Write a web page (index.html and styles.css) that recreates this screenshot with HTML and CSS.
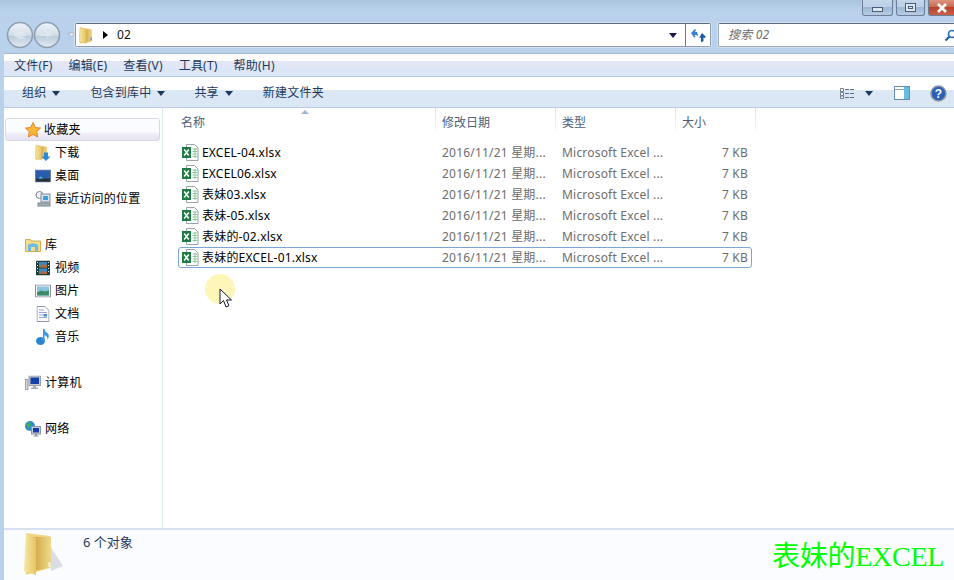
FILE: index.html
```html
<!DOCTYPE html>
<html lang="zh">
<head>
<meta charset="utf-8">
<title>02</title>
<link rel="stylesheet" href="styles.css">
</head>
<body>
<svg class="defs" width="0" height="0">
  <defs>
    <linearGradient id="fold" x1="0" y1="0" x2="1" y2="0"><stop offset="0" stop-color="#f8e8a8"/><stop offset="1" stop-color="#e6c463"/></linearGradient>
    <linearGradient id="foldin" x1="0" y1="0" x2="1" y2="0"><stop offset="0" stop-color="#cfa845"/><stop offset="1" stop-color="#efd98a"/></linearGradient>
    <linearGradient id="orb" x1="0" y1="0" x2="0" y2="1"><stop offset="0" stop-color="#eef3f9"/><stop offset=".5" stop-color="#d3deea"/><stop offset=".55" stop-color="#bccbdb"/><stop offset="1" stop-color="#e2eaf2"/></linearGradient>
    <symbol id="folder" viewBox="0 0 14 17">
      <path d="M1 .5l11 1.500v12.500l-11 2z" fill="#eccf74"/>
      <path d="M6 2.500h7v11.500l-7 2z" fill="url(#foldin)"/>
      <path d="M1 .5l6 2.500v13.500l-7-2z" fill="url(#fold)" stroke="#dcbc60" stroke-width=".5"/>
      <rect x="11.500" y="10.500" width="1.500" height="3" fill="#5aa0d8"/>
    </symbol>
    <symbol id="excel" viewBox="0 0 17 17">
      <path d="M4.500 .5h8l3.500 3.500v12.500h-11.500z" fill="#fff" stroke="#9aa3a8"/>
      <path d="M10.500 5h5M10.500 7.500h5M10.500 10h5M10.500 12.500h5M13 4v10" stroke="#8fc7a0"/>
      <rect x="0" y="3" width="9" height="11" fill="#1f7a45"/>
      <path d="M2.200 5.500l4.600 6M6.800 5.500l-4.600 6" stroke="#fff" stroke-width="1.500"/>
    </symbol>
  </defs>
</svg>

<div class="window">
  <header class="titlebar">
    <div class="winbtn min"><span class="min-glyph"></span></div>
    <div class="winbtn max"><span class="max-glyph"></span></div>
    <div class="winbtn close">
      <svg width="12" height="10" viewBox="0 0 12 10"><path d="M2 1l8 8M10 1l-8 8" stroke="#fff" stroke-width="2.600"/></svg>
    </div>
  </header>

  <nav class="navbar">
    <div class="orbs">
      <svg width="70" height="30" viewBox="0 0 70 30">
        <circle cx="15" cy="15" r="12.500" fill="url(#orb)" stroke="#8c9db0" stroke-width="1.500"/>
        <circle cx="42" cy="15" r="12.500" fill="url(#orb)" stroke="#8c9db0" stroke-width="1.500"/>
        <path d="M8 15l6-4h7l-3 3h3v2h-3l3 3h-7zM34 14h8l-2-3 8 4-8 4 2-3h-8z" fill="#e6edf4" opacity=".6"/>
        <path d="M63 13h7l-3.500 4z" fill="#e9eff6" stroke="#93a4b6" stroke-width=".6"/>
      </svg>
    </div>
    <div class="addr">
      <svg class="addr-folder" width="14" height="17"><use href="#folder"/></svg>
      <svg class="addr-arrow" width="5" height="8" viewBox="0 0 5 8"><path d="M0 0l5 4-5 4z" fill="#000"/></svg>
      <span class="addr-text">02</span>
      <span class="addr-drop"></span>
      <span class="addr-refresh">
        <svg width="15" height="15" viewBox="0 0 15 15"><path d="M0 5l4-4 1 1-1 2h2l1 3v1L5 7H3.500l1 2L3 9.500z" fill="#3a80d0"/><path d="M11 5l4 4-1.500 1-1-.5V13L10 14.500V9.500L8 10z" fill="#1a5aa8"/></svg>
      </span>
    </div>
    <div class="search">
      <span class="search-text">搜索 02</span>
      <svg class="search-icon" width="13" height="13" viewBox="0 0 13 13"><circle cx="8" cy="5" r="3.500" fill="#fff" stroke="#2a6fb8" stroke-width="1.700"/><path d="M5.500 7.500L1.500 11.500" stroke="#1c5ca8" stroke-width="2.200"/></svg>
    </div>
  </nav>

  <main class="frame">
    <div class="menubar">
      <span>文件(F)</span><span>编辑(E)</span><span>查看(V)</span><span>工具(T)</span><span>帮助(H)</span>
    </div>

    <div class="toolbar">
      <span class="tool t1">组织<i class="caret"></i></span>
      <span class="tool t2">包含到库中<i class="caret"></i></span>
      <span class="tool t3">共享<i class="caret"></i></span>
      <span class="tool t4">新建文件夹</span>
      <span class="tool-right">
        <svg class="view-icon" width="15" height="11" viewBox="0 0 15 11"><path d="M.5.5h3v3h-3zM.5 4.500h3v3h-3zM.5 8h3v2.500h-3z" fill="#fff" stroke="#6d7f94"/><path d="M5 1.500h10M5 5.500h10M5 9.500h10" stroke="#5d6f85" stroke-dasharray="4 1"/></svg>
        <i class="caret view-caret"></i>
        <svg class="pane-icon" width="16" height="14" viewBox="0 0 16 14"><rect x=".5" y=".5" width="15" height="13" fill="#fff" stroke="#6b8bb0"/><rect x="10" y="1" width="5" height="12" fill="#62bde0"/><path d="M1 3.500h9" stroke="#8aa4c2"/></svg>
        <svg class="help-icon" width="17" height="17" viewBox="0 0 17 17"><circle cx="8.500" cy="8.500" r="7.500" fill="#2b5fb5" stroke="#8c97a6" stroke-width="1.500"/><text x="8.500" y="13" text-anchor="middle" class="help-q">?</text></svg>
      </span>
    </div>

    <div class="body">
      <aside class="sidebar">
        <section class="group">
          <div class="row head fav">
            <svg class="ico" width="16" height="16" viewBox="0 0 16 16"><path d="M8 .5l2.300 5 5.200.6-3.800 3.600 1 5.300L8 12.400 3.300 15l1-5.300L.5 6.100l5.200-.6z" fill="#f8b838" stroke="#e8822a"/></svg>
            <span>收藏夹</span>
          </div>
          <div class="row item">
            <svg class="ico" width="16" height="17" viewBox="0 0 16 17"><use href="#folder" width="13" height="16"/><path d="M9 8h4v4h2.500L11 16.500 6.500 12H9z" fill="#2b88d8"/></svg>
            <span>下载</span>
          </div>
          <div class="row item">
            <svg class="ico" width="16" height="13" viewBox="0 0 16 13"><rect x=".5" y=".5" width="15" height="12" fill="#2a5cb0" stroke="#6d7f94"/><rect x="1" y="9" width="14" height="3" fill="#2b3138"/><path d="M3 9l3-2 2 2z" fill="#5fc0d8"/></svg>
            <span>桌面</span>
          </div>
          <div class="row item">
            <svg class="ico" width="16" height="16" viewBox="0 0 16 16"><circle cx="4.500" cy="4" r="3.500" fill="#eef1f4" stroke="#7a8590"/><rect x="6" y="3" width="9" height="8" fill="#d8e2ec" stroke="#808b96"/><rect x="8" y="5" width="5" height="4" fill="#3aa0d8"/><rect x="3" y="12" width="12" height="3" fill="#a8b0b8" stroke="#7a8590"/></svg>
            <span>最近访问的位置</span>
          </div>
        </section>

        <section class="group">
          <div class="row head">
            <svg class="ico" width="16" height="14" viewBox="0 0 16 14"><path d="M.5 1.500h5l1 1.500h9v10.500H.5z" fill="#f5dc8c" stroke="#cfae55"/><path d="M3 13V7q5-3.500 10 0v6h-3V9H6v4z" fill="#6cbae6"/></svg>
            <span>库</span>
          </div>
          <div class="row item">
            <svg class="ico" width="14" height="15" viewBox="0 0 14 15"><rect width="14" height="15" fill="#1f3d3d"/><path d="M3 1.500h8v5.500H3zM3 8h8v5.500H3z" fill="#3e86c0"/><path d="M4 6l3-3 2 2 2-1v3H4zM4 13l3-3 2 2 2-1v2.500H4z" fill="#b86838"/><path d="M1 2h1M1 5h1M1 8h1M1 11h1M12 2h1M12 5h1M12 8h1M12 11h1" stroke="#d8e8e8"/></svg>
            <span>视频</span>
          </div>
          <div class="row item">
            <svg class="ico" width="16" height="13" viewBox="0 0 16 13"><rect x=".5" y=".5" width="15" height="12" fill="#f2f4f6" stroke="#8c959e"/><rect x="2" y="2" width="12" height="9" fill="#8cc4dc"/><path d="M2 8l4-2 4 1 4-1v5H2z" fill="#3c8a68"/></svg>
            <span>图片</span>
          </div>
          <div class="row item">
            <svg class="ico" width="13" height="16" viewBox="0 0 13 16"><path d="M.5.5h8l4 4v11H.5z" fill="#fbfcfe" stroke="#939aa3"/><path d="M2.500 4h5M2.500 6.500h8M2.500 9h4M2.500 11.500h8" stroke="#9ba6d8"/><rect x="7" y="8" width="3.500" height="2.500" fill="#4a8ac0"/></svg>
            <span>文档</span>
          </div>
          <div class="row item">
            <svg class="ico" width="14" height="17" viewBox="0 0 14 17"><ellipse cx="4.500" cy="12.500" rx="4.500" ry="4" fill="#2b86d0"/><path d="M7 12.500V.5h1.500q.5 3 3.500 4.500 2 2.500-.5 6 0-3.500-3-4.500v6z" fill="#3a9ae0"/></svg>
            <span>音乐</span>
          </div>
        </section>

        <section class="group">
          <div class="row head">
            <svg class="ico" width="16" height="15" viewBox="0 0 16 15"><rect x=".5" y="4" width="2.500" height="10" fill="#d4d8dc" stroke="#7d858d" stroke-width=".7"/><rect x="4" y=".5" width="11.500" height="9.500" fill="#c8ccd0" stroke="#9aa0a6"/><rect x="5.500" y="2" width="8.500" height="6.500" fill="#123fa8"/><path d="M8 10h3v2h2v1.500H6V12h2z" fill="#a8aeb4"/></svg>
            <span>计算机</span>
          </div>
        </section>

        <section class="group">
          <div class="row head">
            <svg class="ico" width="16" height="16" viewBox="0 0 16 16"><circle cx="5" cy="5" r="5" fill="#2f8ccc"/><path d="M1 3l3-2 2 3-3 3zM6 6l3 1-3 3z" fill="#3fb04a"/><rect x="6.500" y="5.500" width="9" height="7.500" fill="#c8ccd2" stroke="#8f959c"/><rect x="8" y="7" width="6" height="4.500" fill="#123fa8"/><path d="M10 13h2v1.500h1.500v1h-5v-1H10z" fill="#8f959c"/></svg>
            <span>网络</span>
          </div>
        </section>
      </aside>

      <section class="content">
        <div class="colhead">
          <span class="col c-name">名称<i class="sort"></i></span>
          <span class="col c-date">修改日期</span>
          <span class="col c-type">类型</span>
          <span class="col c-size">大小</span>
        </div>
        <div class="files">
          <div class="file"><span class="fname"><svg width="17" height="17"><use href="#excel"/></svg>EXCEL-04.xlsx</span><span>2016/11/21 星期...</span><span>Microsoft Excel ...</span><span class="fsize">7 KB</span></div>
          <div class="file"><span class="fname"><svg width="17" height="17"><use href="#excel"/></svg>EXCEL06.xlsx</span><span>2016/11/21 星期...</span><span>Microsoft Excel ...</span><span class="fsize">7 KB</span></div>
          <div class="file"><span class="fname"><svg width="17" height="17"><use href="#excel"/></svg>表妹03.xlsx</span><span>2016/11/21 星期...</span><span>Microsoft Excel ...</span><span class="fsize">7 KB</span></div>
          <div class="file"><span class="fname"><svg width="17" height="17"><use href="#excel"/></svg>表妹-05.xlsx</span><span>2016/11/21 星期...</span><span>Microsoft Excel ...</span><span class="fsize">7 KB</span></div>
          <div class="file"><span class="fname"><svg width="17" height="17"><use href="#excel"/></svg>表妹的-02.xlsx</span><span>2016/11/21 星期...</span><span>Microsoft Excel ...</span><span class="fsize">7 KB</span></div>
          <div class="file selected"><span class="fname"><svg width="17" height="17"><use href="#excel"/></svg>表妹的EXCEL-01.xlsx</span><span>2016/11/21 星期...</span><span>Microsoft Excel ...</span><span class="fsize">7 KB</span></div>
        </div>
      </section>
    </div>

    <footer class="status">
      <svg class="status-folder" width="40" height="44" viewBox="0 0 40 44">
        <path d="M26 14l13 20-12 5z" fill="#c9d0dc" opacity=".7"/>
        <path d="M2 1l24 3v32L2 43z" fill="#efd684"/>
        <path d="M10 5h17v30l-17 4z" fill="url(#foldin)"/>
        <path d="M2 1l10 5v37L0 39z" fill="url(#fold)"/>
        <rect x="24.500" y="30" width="2" height="5" fill="#f5f5e8"/>
      </svg>
      <span class="status-text">6 个对象</span>
    </footer>
  </main>

  <div class="spot"></div>
  <svg class="cursor" width="14" height="21" viewBox="0 0 14 21"><path d="M1 1v15l3.500-3.500L7 19l3-1.300-2.500-5.700H12.500z" fill="#fff" stroke="#14143c" stroke-width="1"/></svg>
  <div class="watermark">表妹的EXCEL</div>
</div>
</body>
</html>
```
FILE: styles.css
```css
* { box-sizing: border-box; }
html, body { margin: 0; padding: 0; }
body {
  width: 954px;
  height: 580px;
  overflow: hidden;
  font: 12px/1 "Noto Sans", "Noto Sans CJK SC", sans-serif;
  letter-spacing: .2px;
  color: #000;
}
.defs { position: absolute; }
.window {
  position: relative;
  width: 954px;
  height: 580px;
  display: flex;
  flex-direction: column;
  background: #b9d1ea;
  overflow: hidden;
}

/* title bar */
.titlebar {
  height: 22px;
  flex: none;
  display: flex;
  justify-content: flex-end;
  align-items: flex-start;
  gap: 3px;
  background: linear-gradient(#a9c4dd 0, #b9d1ea 10px);
}
.winbtn {
  height: 16px;
  border: 1px solid #6d7f98;
  border-top: 0;
  border-radius: 0 0 3px 3px;
  display: flex;
  align-items: center;
  justify-content: center;
}
.min, .max { background: linear-gradient(#c3d6ea 0, #bcd0e6 45%, #9db8d4 50%, #b6cde4 100%); }
.min { width: 31px; }
.max { width: 29px; }
.close { width: 26px; border-right: 0; border-radius: 0 0 0 3px; background: linear-gradient(#dd9480 0, #c86a52 45%, #b8412c 50%, #c9604a 100%); }
.min-glyph { width: 11px; height: 5px; margin-top: 3px; background: #dce6f0; border: 1px solid #4c5e74; }
.max-glyph { width: 11px; height: 9px; background: #dce6f0; border: 1px solid #4c5e74; box-shadow: inset 0 0 0 2px #dce6f0, inset 0 0 0 3px #4c5e74; }

/* nav bar */
.navbar {
  height: 31px;
  flex: none;
  display: flex;
  align-items: flex-start;
  padding-left: 5px;
}
.orbs { width: 70px; height: 30px; flex: none; line-height: 0; }
.orbs svg { display: block; margin-top: -2px; }
.addr {
  width: 636px;
  height: 24px;
  flex: none;
  margin-top: 1px;
  display: flex;
  align-items: center;
  background: #fff;
  border: 1px solid #8e9dae;
  border-top-color: #5f6c7a;
  border-radius: 2px;
  box-shadow: 0 0 0 1px rgba(255,255,255,.35);
}
.addr-folder { margin-left: 3px; flex: none; }
.addr-arrow { margin-left: 10px; flex: none; }
.addr-text { margin-left: 9px; color: #111; }
.addr-drop {
  margin-left: auto;
  margin-right: 8px;
  border: 4px solid transparent;
  border-top: 5px solid #1a1a50;
  border-bottom: 0;
}
.addr-refresh {
  width: 25px;
  height: 100%;
  flex: none;
  border-left: 1px solid #6e7b8a;
  display: flex;
  align-items: center;
  justify-content: center;
}
.search {
  width: 240px;
  height: 24px;
  flex: none;
  margin-left: 7px;
  margin-top: 1px;
  display: flex;
  align-items: center;
  background: #fff;
  border: 1px solid #9dabb9;
  border-top-color: #5f6c7a;
  border-radius: 2px;
  box-shadow: 0 0 0 1px rgba(255,255,255,.35);
}
.search-text { margin-left: 9px; font-style: italic; color: #6d6d6d; }
.search-icon { margin-left: auto; }

/* frame */
.frame {
  flex: 1;
  min-height: 0;
  margin-left: 4px;
  display: flex;
  flex-direction: column;
  background: #fff;
  border-top: 1px solid #a2b9d2;
}

/* menu */
.menubar {
  height: 23px;
  flex: none;
  display: flex;
  align-items: center;
  padding: 2px 0 0 10px;
  gap: 16px;
  color: #1e395b;
  background: linear-gradient(#fff 0, #fff 7px, #e3e7f5 7px, #e3e7f5 13px, #dce6f7 13px);
  border-bottom: 1px solid #b4c6dd;
}

/* toolbar */
.toolbar {
  height: 31px;
  flex: none;
  display: flex;
  align-items: center;
  padding-top: 2px;
  color: #1e395b;
  background: linear-gradient(#fff 0, #fff 13px, #dce7f6 13px);
  border-bottom: 1px solid #b9cbe0;
}
.tool { display: inline-flex; align-items: center; }
.t1 { margin-left: 18px; }
.t2 { margin-left: 30px; }
.t3 { margin-left: 29px; }
.t4 { margin-left: 30px; }
.caret {
  display: inline-block;
  margin-left: 6px;
  border: 4px solid transparent;
  border-top: 5px solid #1e395b;
  border-bottom: 0;
}
.tool-right { margin-left: auto; display: flex; align-items: center; }
.view-caret { margin-left: 10px; }
.pane-icon { margin-left: 21px; }
.help-icon { margin-left: 20px; margin-right: 7px; }
.help-q { font: bold 12px "Liberation Sans", sans-serif; fill: #fff; }

/* body */
.body { flex: 1; min-height: 0; display: flex; background: #fff; }
.sidebar {
  width: 159px;
  flex: none;
  padding: 10px 1px 0 1px;
  border-right: 1px solid #dbe6f5;
  display: flex;
  flex-direction: column;
  gap: 23px;
}
.row { height: 23px; display: flex; align-items: center; position: relative; }
.row .ico { position: absolute; top: 50%; left: 28px; transform: translate(-50%, -50%); }
.row.head { padding-left: 40px; }
.row.item { padding-left: 50px; }
.row.item .ico { left: 38px; }
.row.fav {
  width: 155px;
  padding-left: 38px;
  border: 1px solid #d8dbe2;
  border-radius: 3px;
  background: linear-gradient(#fbfcff 0, #fbfcff 13px, #f1eff7 14px, #e6e2f2 100%);
}
.row.fav .ico { left: 27px; }

/* content */
.content { flex: 1; min-width: 0; display: flex; flex-direction: column; }
.colhead { height: 23px; flex: none; display: flex; color: #4c607a; letter-spacing: 0; }
.col {
  height: 23px;
  display: flex;
  align-items: center;
  padding-left: 6px;
  padding-top: 7px;
  position: relative;
  border-right: 1px solid;
  border-image: linear-gradient(#d8e3ef, #f4f7fb) 1;
}
.c-name { width: 273px; padding-left: 18px; }
.c-date, .c-type { width: 120px; }
.c-size { width: 80px; }
.sort {
  position: absolute;
  left: 138px;
  top: 2px;
  border: 4px solid transparent;
  border-bottom: 4px solid #9fb6d0;
  border-top: 0;
}
.files { padding: 11px 0 0 15px; }
.file {
  width: 574px;
  height: 21px;
  display: grid;
  grid-template-columns: 263px 120px 120px 71px;
  align-items: center;
  color: #6d6d6d;
  border: 1px solid transparent;
}
.file > span:first-child { margin-left: -1px; }
.fname {
  display: flex;
  align-items: center;
  gap: 3px;
  padding-left: 4px;
  color: #000;
}
.fname svg { flex: none; }
.fsize { text-align: right; padding-right: 5px; }
.selected { border-color: #7da5d4; border-radius: 3px; }

/* status */
.status {
  height: 52px;
  flex: none;
  display: flex;
  align-items: flex-start;
  background: #fbfcff;
  border-top: 2px solid #d6e0f2;
}
.status-folder { margin: 2px 0 0 20px; flex: none; }
.status-text { margin: 6px 0 0 19px; color: #1e395b; font-size: 13px; letter-spacing: 0; }

/* overlays */
.spot {
  position: absolute;
  left: 205px;
  top: 274px;
  width: 30px;
  height: 30px;
  border-radius: 50%;
  background: #fdf6b8;
}
.cursor { position: absolute; left: 219px; top: 288px; }
.watermark {
  position: absolute;
  left: 772px;
  top: 541px;
  font: 28px/32px "Liberation Serif", "Noto Sans CJK SC", serif;
  letter-spacing: -.25px;
  color: #00ff00;
  white-space: nowrap;
}
```
